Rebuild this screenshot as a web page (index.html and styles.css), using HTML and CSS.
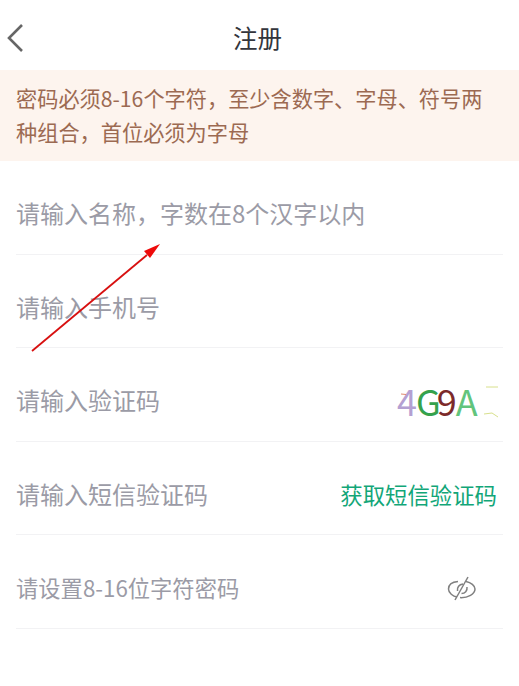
FILE: index.html
```html
<!DOCTYPE html>
<html lang="zh">
<head>
  <meta charset="UTF-8" />
  <meta name="viewport" content="width=device-width, initial-scale=1.0" />
  <title>注册</title>
  <link rel="stylesheet" href="styles.css">
</head>
<body>
  <header class="topbar">
    <svg class="back" width="18" height="30" viewBox="0 0 18 30">
      <path d="M16 2 L3 15 L16 28" fill="none" stroke="#666" stroke-width="2.6" />
    </svg>
    <h1>注册</h1>
  </header>

  <div class="notice">密码必须8-16个字符，至少含数字、字母、符号两种组合，首位必须为字母</div>

  <div class="form">
    <div class="row"><span class="hint">请输入名称，字数在8个汉字以内</span></div>
    <div class="row"><span class="hint">请输入手机号</span></div>
    <div class="row">
      <span class="hint">请输入验证码</span>
      <div class="captcha">
        <span class="c1">4</span><span class="c2">G</span><span class="c3">9</span><span class="c4">A</span>
        <svg class="noise" width="104" height="40" viewBox="0 0 104 40">
          <path d="M89 7 L101 7" stroke="#d8e08c" stroke-width="1" fill="none" />
          <path d="M87 34 L95 33 L101 37" stroke="#d8e08c" stroke-width="1" fill="none" />
          <path d="M4 14 L9 14.500" stroke="#e08a70" stroke-width="1" fill="none" />
        </svg>
      </div>
    </div>
    <div class="row">
      <span class="hint">请输入短信验证码</span>
      <a class="sms">获取短信验证码</a>
    </div>
    <div class="row">
      <span class="hint">请设置8-16位字符密码</span>
      <svg class="eye" width="30" height="28" viewBox="0 0 30 28">
        <path d="M11 8.500 C5 9 1.500 12 1.500 16 C1.500 20 6 23.500 10 24 M19 8.500 C24 9.500 28 12.500 28 16 C28 21 21 25 13 24.600 M16 11 C12 11.500 10 14 10.500 18 M20 14 C20.500 18 18 20.500 14.500 20.500" fill="none" stroke="#808080" stroke-width="1.500" />
        <path d="M21 4 L8 27" fill="none" stroke="#808080" stroke-width="1.500" />
      </svg>
    </div>
  </div>

  <svg class="arrow" width="135" height="120" viewBox="0 0 135 120">
    <path d="M1 117 L116 21" stroke="#d81010" stroke-width="1.800" fill="none" />
    <path d="M129 10 L113 17 L119 24 Z" fill="#ee0a0a" />
  </svg>
</body>
</html>
```

FILE: styles.css
```css
body {
  margin: 0;
  background: #fff;
  font-family: "Noto Sans CJK SC", "Noto Sans", sans-serif;
  color: #333;
}
.topbar {
  height: 70px;
  display: flex;
  align-items: center;
  justify-content: center;
  position: relative;
}
.topbar h1 {
  margin: 6px 4px 0 0;
  font-size: 24.500px;
  line-height: 40px;
  font-weight: 400;
  color: #33353c;
}
.back {
  position: absolute;
  left: 6px;
  top: 23px;
}
.notice {
  background: #fdf4ee;
  color: #9c6a52;
  font-size: 21.200px;
  line-height: 33.500px;
  padding: 11px 16px 13px;
  height: 67px;
}
.form {
  padding: 0 16px;
}
.row {
  height: 93.500px;
  box-sizing: border-box;
  border-bottom: 1px solid #f2f2f4;
  display: flex;
  align-items: center;
  justify-content: space-between;
  padding: 12px 0 0 0;
}
.hint {
  font-size: 24px;
  color: #9b9ba6;
  line-height: 34px;
}
.row:nth-child(5) .hint {
  font-size: 22.300px;
}
.sms {
  color: #12a678;
  font-size: 22.400px;
  line-height: 34px;
  margin-right: 6px;
}
.captcha {
  position: relative;
  width: 108px;
  height: 40px;
  margin-right: -2px;
  font-size: 36px;
  line-height: 40px;
  white-space: nowrap;
  letter-spacing: -1px;
}
.c1 { color: #b4a0d2; }
.c2 { color: #35a24c; }
.c3 { color: #7c2a2a; margin-left: -3px; }
.c4 { color: #62c47c; }
.noise {
  position: absolute;
  left: 0;
  top: 0;
}
.eye {
  margin-right: 26px;
}
.arrow {
  position: absolute;
  left: 31px;
  top: 234px;
}
```
